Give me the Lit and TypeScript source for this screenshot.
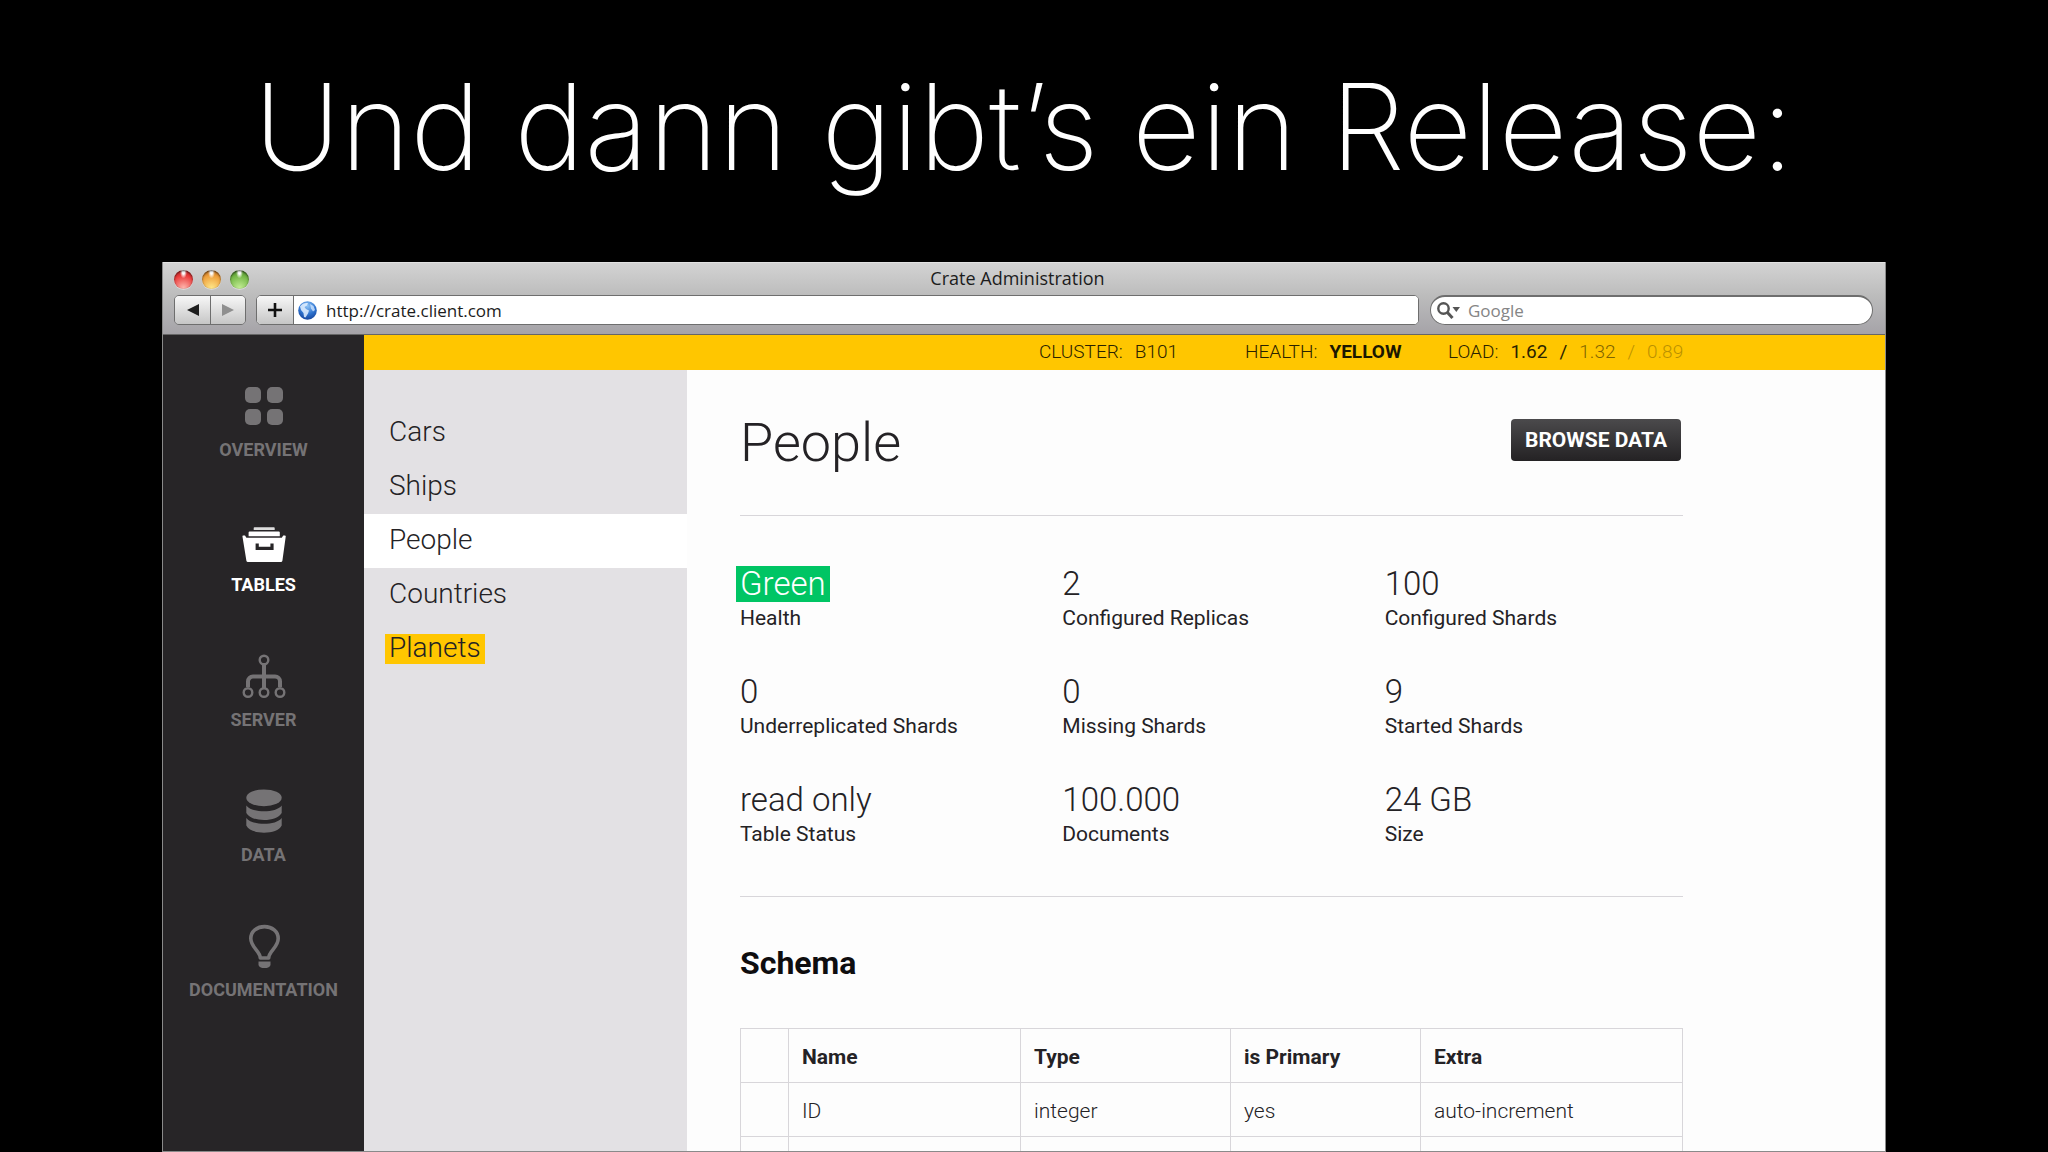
import { LitElement, html, css, svg } from "lit";
import { customElement } from "lit/decorators.js";
import { classMap } from "lit/directives/class-map.js";

const icons: Record<string, unknown> = {
  overview: svg`<rect x="3" y="3" width="16" height="16" rx="5"/><rect x="25" y="3" width="16" height="16" rx="5"/><rect x="3" y="25" width="16" height="16" rx="5"/><rect x="25" y="25" width="16" height="16" rx="5"/>`,
  tables: svg`<path d="M12.5 8.200h19.400a.8.8 0 0 1 .8.8v2h-21V9a.8.8 0 0 1 .8-.8z" opacity=".85"/><path d="M7.600 12.400h29.200a1 1 0 0 1 1 1v3.800H6.600v-3.800a1 1 0 0 1 1-1z"/><path fill-rule="evenodd" d="M1 16.600h2l1.400 2.200h35.400l1.400-2.200h1.600a.9.9 0 0 1 .9 1.100l-3.300 24a1.600 1.600 0 0 1-1.600 1.300H6a1.600 1.600 0 0 1-1.600-1.300L.5 17.700a.9.9 0 0 1 .5-1.100zM13.600 24.500v6.500h18v-6.500h-3.200v3.300H16.800v-3.300z"/>`,
  server: svg`<g fill="none" stroke="currentColor"><g stroke-width="2.400"><circle cx="22" cy="6" r="4.300"/><circle cx="6" cy="38.500" r="4.300"/><circle cx="22" cy="38.500" r="4.300"/><circle cx="38" cy="38.500" r="4.300"/></g><path stroke-width="4" d="M22 11v23M6 33v-5.500a5 5 0 0 1 5-5h22a5 5 0 0 1 5 5V33"/></g>`,
  data: svg`<ellipse cx="22" cy="8.800" rx="17.700" ry="8.400"/><path d="M4.300 16.500c3 4 10 5.800 17.700 5.800s14.700-1.800 17.700-5.800v7.500c-2.500 4.600-9.500 7-17.700 7s-15.200-2.400-17.700-7z"/><path d="M4.300 29c3 4 10 5.800 17.700 5.800S36.700 33 39.700 29v7.500c-2.500 4.800-9.500 7.200-17.700 7.200s-15.200-2.400-17.700-7.200z"/>`,
  docs: svg`<path fill="none" stroke="currentColor" stroke-width="3.600" stroke-linejoin="round" d="M18.300 34c0-7-9.500-10.500-9.500-19.500C8.800 7.500 15 2.600 22.500 2.600S36.200 7.500 36.200 14.500c0 9-9.500 12.500-9.500 19.500z"/><path d="M16.500 37.600h12v3.200c0 2-2.700 3.400-6 3.400s-6-1.400-6-3.400z"/>`,
};

const sections = [
  { id: "overview", label: "OVERVIEW" },
  { id: "tables", label: "TABLES" },
  { id: "server", label: "SERVER" },
  { id: "data", label: "DATA" },
  { id: "docs", label: "DOCUMENTATION" },
];

const tables = [
  { name: "Cars" },
  { name: "Ships" },
  { name: "People" },
  { name: "Countries" },
  { name: "Planets", warn: true },
];

const stats = [
  { value: "Green", label: "Health", good: true },
  { value: "2", label: "Configured Replicas" },
  { value: "100", label: "Configured Shards" },
  { value: "0", label: "Underreplicated Shards" },
  { value: "0", label: "Missing Shards" },
  { value: "9", label: "Started Shards" },
  { value: "read only", label: "Table Status" },
  { value: "100.000", label: "Documents" },
  { value: "24 GB", label: "Size" },
];

const schema = [
  ["", "ID", "integer", "yes", "auto-increment"],
  ["", "", "", "", ""],
];

const reset = css`
  * { box-sizing: border-box; margin: 0; padding: 0; }
  a { color: inherit; text-decoration: none; }
  button, input { font: inherit; color: inherit; border: 0; background: none; outline: none; }
  svg { display: block; }
`;

@customElement("browser-chrome")
class BrowserChrome extends LitElement {
  static styles = [reset, css`
    :host {
      display: block;
      font-family: "Open Sans", "Noto Sans", sans-serif;
      font-size: 17px;
      color: #1c1c1c;
    }
    .chrome {
      height: 73px;
      padding: 0 12px 0 11px;
      background: linear-gradient(#d3d3d3, #bcbcbc 46%, #a5a3a8);
      border-top: 1px solid #e2e2e2;
      border-bottom: 1px solid #666;
    }
    .titlebar { display: grid; grid-template-columns: 100px 1fr 112px; align-items: center; height: 32px; }
    .lights { display: flex; gap: 9px; }
    .light { width: 19px; height: 19px; border-radius: 50%; box-shadow: inset 0 1px 2px rgba(0,0,0,.65), 0 1px 0 rgba(255,255,255,.4); }
    .red { background: radial-gradient(ellipse at 50% 12%, #fff 0 8%, transparent 26%), radial-gradient(circle at 50% 95%, #ffb9b0, #ea3c3c 62%, #9c1c1c); }
    .amber { background: radial-gradient(ellipse at 50% 12%, #fff 0 8%, transparent 26%), radial-gradient(circle at 50% 95%, #ffe88a, #ee9f3c 62%, #a85a16); }
    .green { background: radial-gradient(ellipse at 50% 12%, #fff 0 8%, transparent 26%), radial-gradient(circle at 50% 95%, #c4ee96, #74b746 62%, #3e7420); }
    .title { text-align: center; font-size: 18px; line-height: 30px; padding-bottom: 2px; }
    .toolbar { display: flex; align-items: stretch; height: 30px; }
    .pair, .address { display: flex; border: 1px solid #6e6e6e; border-radius: 5px; overflow: hidden; }
    .pair { margin-right: 10px; }
    .tool { width: 35px; display: grid; place-items: center; background: linear-gradient(#f7f7f7, #c6c6c6); }
    .tool + .tool { border-left: 1px solid #6e6e6e; }
    .plus { width: 37px; border-right: 1px solid #6e6e6e; }
    .address { flex: 1; background: #fff; align-items: stretch; margin-right: 11px; }
    .globe { align-self: center; margin: 0 9px 0 4px; flex: none; }
    .url { flex: 1; min-width: 0; background: #fff; }
    .search {
      display: flex; align-items: center; width: 443px; padding-left: 6px;
      border: 1px solid #6e6e6e; border-top-width: 2px; border-radius: 15px; background: #fff;
    }
    .query { flex: 1; min-width: 0; margin-left: 8px; }
    .query::placeholder { color: #858585; opacity: 1; }
  `];

  render() {
    return html`
      <header class="chrome">
        <div class="titlebar">
          <div class="lights">
            <button class="light red" aria-label="Close"></button>
            <button class="light amber" aria-label="Minimize"></button>
            <button class="light green" aria-label="Zoom"></button>
          </div>
          <div class="title">Crate Administration</div>
        </div>
        <div class="toolbar">
          <div class="pair">
            <button class="tool" aria-label="Back"><svg width="12" height="12" viewBox="0 0 12 12"><path d="M12 0v12L0 6z" fill="#1d1d1d"/></svg></button>
            <button class="tool" aria-label="Forward"><svg width="12" height="12" viewBox="0 0 12 12"><path d="M0 0v12l12-6z" fill="#8f8f8f"/></svg></button>
          </div>
          <div class="address">
            <button class="tool plus" aria-label="Add bookmark"><svg width="14" height="14" viewBox="0 0 14 14"><path d="M7 0v14M0 7h14" stroke="#111" stroke-width="2.600"/></svg></button>
            <svg class="globe" width="19" height="19" viewBox="0 0 19 19">
              <defs><radialGradient id="sea" cx=".5" cy=".25" r=".8"><stop offset="0" stop-color="#8fc4f6"/><stop offset=".55" stop-color="#2f74cf"/><stop offset="1" stop-color="#123f96"/></radialGradient></defs>
              <circle cx="9.500" cy="9.500" r="9.300" fill="url(#sea)"/>
              <path d="M2 5.500C4 2.500 7 1.500 10 2L9 4.500 6.500 6 8 8l3 1.500-1 3-2.500 4-1.500-.5-.5-4L3 9z" fill="#e4f1ff" opacity=".85"/>
              <path d="M12 3l3.500 2 1.500 4-2 1.500-2-3z" fill="#cfe5ff" opacity=".8"/>
            </svg>
            <input class="url" type="text" aria-label="Address" value="http://crate.client.com" />
          </div>
          <div class="search">
            <svg width="23" height="17" viewBox="0 0 23 17"><circle cx="6.500" cy="6.500" r="5.200" fill="none" stroke="#555" stroke-width="2.400"/><path d="M10 10l5.500 6" stroke="#555" stroke-width="3"/><path d="M15.500 5H23l-3.700 5z" fill="#555"/></svg>
            <input class="query" type="search" aria-label="Search" placeholder="Google" />
          </div>
        </div>
      </header>
    `;
  }
}

@customElement("crate-admin")
class CrateAdmin extends LitElement {
  static styles = [reset, css`
    :host {
      display: grid;
      grid-template-columns: 201px 1fr;
      font-family: Roboto, "Liberation Sans", sans-serif;
      color: #242225;
      background: #fdfdfd;
    }
    .nav { background: #272527; padding-top: 49px; }
    .section { display: flex; flex-direction: column; align-items: center; height: 135px; color: #757375; font-size: 18px; font-weight: 700; }
    .section.active { color: #fff; }
    .icon { width: 44px; height: 44px; fill: currentColor; }
    .caption { line-height: 22px; margin-top: 11px; }
    .body { display: grid; grid-template-rows: 35px 1fr; grid-template-columns: 323px 1fr; min-width: 0; }
    .status {
      grid-column: 1 / -1; display: grid; grid-template-columns: 206px 203px 237px; justify-content: end;
      padding-right: 200px; background: #ffc600; font-size: 19px; font-weight: 300; line-height: 34px; color: #2a2200;
    }
    .group { display: flex; gap: 12px; }
    .strong { font-weight: 700; color: #1c1700; }
    .now { font-weight: 400; }
    .recent { opacity: .6; }
    .past { opacity: .32; }
    .list { background: #e3e1e4; padding-top: 36px; list-style: none; font-size: 28px; font-weight: 300; }
    .entry { display: flex; align-items: center; height: 54px; padding-left: 21px; }
    .entry.active { background: #fff; }
    .name { padding: 0 4px 2px; line-height: 28px; }
    .warn { background: #ffc600; }
    .main { padding: 49px 202px 0 53px; min-width: 0; }
    .head { display: flex; justify-content: space-between; align-items: center; height: 42px; padding-right: 2px; }
    .heading { font-size: 54px; font-weight: 300; line-height: 42px; padding-top: 6px; }
    .browse {
      height: 42px; padding: 0 14px; border-radius: 4px; color: #fff; font-size: 21px; font-weight: 700;
      background: linear-gradient(#4b4a4c, #242224);
    }
    .stats {
      display: grid; grid-template-columns: repeat(3, 1fr); gap: 40px 24px;
      margin-top: 54px; padding: 50px 0 46px; border: solid #d8d6da; border-width: 1px 0;
    }
    .stat { display: flex; flex-direction: column-reverse; }
    .value { font-size: 33px; font-weight: 300; line-height: 36px; }
    .good { align-self: flex-start; margin-left: -4px; padding: 0 4px; background: #00c564; color: #fff; }
    .label { font-size: 21px; line-height: 32px; }
    .subheading { font-size: 32px; font-weight: 700; line-height: 40px; margin: 46px 0 45px; color: #0e0d0f; }
    .schema { width: 100%; border-collapse: collapse; table-layout: fixed; font-size: 21px; }
    .cell { height: 54px; padding: 2px 13px 0; border: 1px solid #d8d6da; text-align: left; font-weight: 300; }
    th.cell { font-weight: 700; }
    .c0 { width: 48px; }
    .c1 { width: 232px; }
    .c2 { width: 210px; }
    .c3 { width: 190px; }
  `];

  render() {
    return html`
      <nav class="nav">
        ${sections.map((s) => html`
          <a href="#${s.id}" class=${classMap({ section: true, active: s.id === "tables" })}>
            <svg class="icon" viewBox="0 0 44 44">${icons[s.id]}</svg>
            <span class="caption">${s.label}</span>
          </a>`)}
      </nav>
      <div class="body">
        <div class="status">
          <div class="group"><span>CLUSTER:</span><span>B101</span></div>
          <div class="group"><span>HEALTH:</span><span class="strong">YELLOW</span></div>
          <div class="group">
            <span>LOAD:</span><span class="now">1.62</span><span class="now">/</span><span class="recent">1.32</span><span class="past">/</span><span class="past">0.89</span>
          </div>
        </div>
        <ul class="list">
          ${tables.map((t) => html`
            <li><a href="#${t.name}" class=${classMap({ entry: true, active: t.name === "People" })}>
              <span class=${classMap({ name: true, warn: !!t.warn })}>${t.name}</span>
            </a></li>`)}
        </ul>
        <main class="main">
          <div class="head">
            <h2 class="heading">People</h2>
            <button class="browse">BROWSE DATA</button>
          </div>
          <dl class="stats">
            ${stats.map((s) => html`
              <div class="stat">
                <dt class="label">${s.label}</dt>
                <dd class=${classMap({ value: true, good: !!s.good })}>${s.value}</dd>
              </div>`)}
          </dl>
          <h3 class="subheading">Schema</h3>
          <table class="schema">
            <colgroup><col class="c0" /><col class="c1" /><col class="c2" /><col class="c3" /><col /></colgroup>
            <thead>
              <tr>${["", "Name", "Type", "is Primary", "Extra"].map((h) => html`<th class="cell">${h}</th>`)}</tr>
            </thead>
            <tbody>
              ${schema.map((row) => html`<tr>${row.map((c) => html`<td class="cell">${c}</td>`)}</tr>`)}
            </tbody>
          </table>
        </main>
      </div>
    `;
  }
}

@customElement("app-root")
class AppRoot extends LitElement {
  static styles = [reset, css`
    :host { display: block; }
    .slide { display: flex; flex-direction: column; height: 100vh; overflow: hidden; background: #000; }
    .headline {
      height: 262px; padding-top: 56px; text-align: center; white-space: nowrap; color: #fff;
      font-family: Inter, "Liberation Sans", sans-serif; font-size: 119px; font-weight: 200; line-height: 142px;
    }
    .window {
      flex: 1; min-height: 0; display: flex; flex-direction: column; overflow: hidden;
      margin: 0 162px; border: 1px solid #8a8a8a; border-top: 0;
    }
    .chrome { flex: none; }
    .page { flex: 1; min-height: 0; overflow: hidden; }
  `];

  render() {
    return html`
      <div class="slide">
        <h1 class="headline">Und dann gibt’s ein Release:</h1>
        <div class="window">
          <browser-chrome class="chrome"></browser-chrome>
          <crate-admin class="page"></crate-admin>
        </div>
      </div>
    `;
  }
}
